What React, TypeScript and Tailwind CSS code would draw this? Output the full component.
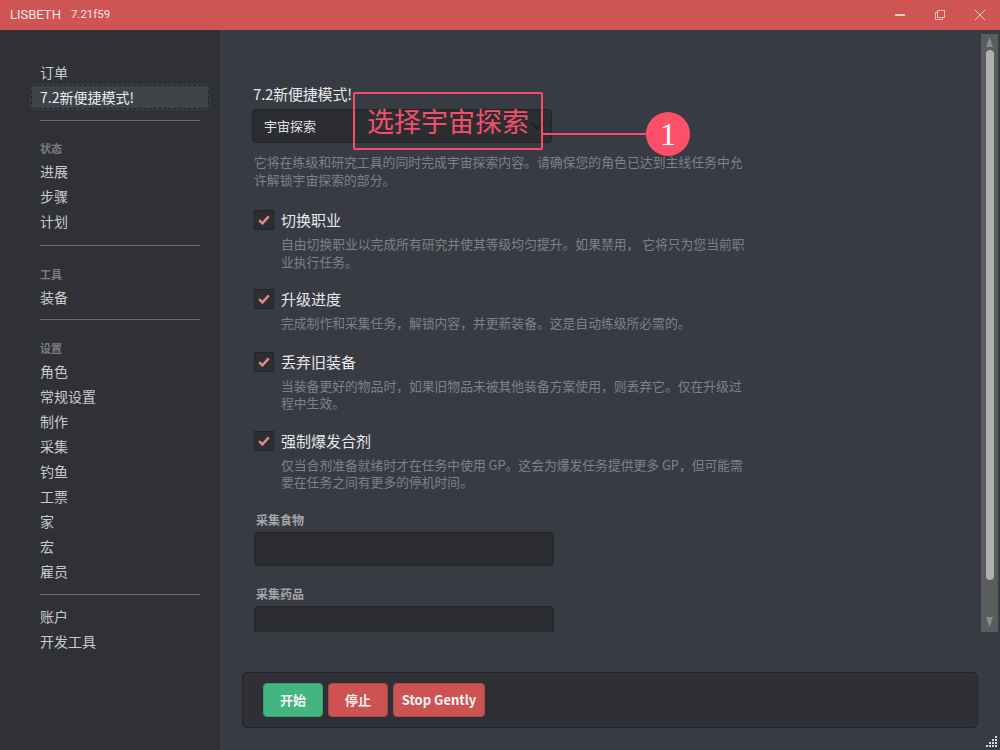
import React from "react";

const font = { fontFamily: '"Noto Sans CJK SC", "Noto Sans", sans-serif' };

function NavItem({ label }: { label: string }) {
  return <div className="h-[25px] pl-[40px] text-[14px] leading-[25px] text-[#c9cacc]">{label}</div>;
}
function NavHead({ label }: { label: string }) {
  return <div className="h-[18px] pl-[40px] text-[11px] leading-[18px] font-bold text-[#7b7d82]">{label}</div>;
}
function Divider({ top, bottom }: { top: string; bottom: string }) {
  return <div className={`ml-[40px] w-[160px] h-px bg-[#6a6b70] ${top} ${bottom}`} />;
}

function Check({ title, desc, className }: { title: string; desc: React.ReactNode; className: string }) {
  return (
    <div className={`flex ${className}`}>
      <div className="w-[20px] h-[20px] mt-[1px] ml-[1px] bg-[#2d2e33] border border-[#232428] flex items-center justify-center shrink-0">
        <svg width="12" height="10" viewBox="0 0 12 10" fill="none">
          <path d="M1.2 5.2 L4.4 8.4 L10.8 1.4" stroke="#e08a8a" strokeWidth="2.4" />
        </svg>
      </div>
      <div className="ml-[7px] w-[470px]">
        <div className="text-[15px] leading-[22px] text-[#e8e9ea]">{title}</div>
        <div className="mt-[4px] text-[12.8px] leading-[17.5px] text-[#7f8186]">{desc}</div>
      </div>
    </div>
  );
}

function Btn({ label, color, border, w }: { label: string; color: string; border: string; w: string }) {
  return (
    <div className={`h-[34px] ${w} ${color} ${border} border rounded-[4px] flex items-center justify-center text-[13px] font-bold text-[#f4f4f4]`}>
      {label}
    </div>
  );
}

export default function App() {
  return (
    <div className="w-[1000px] h-[750px] flex flex-col overflow-hidden bg-[#383b43]" style={font}>
      <div className="h-[30px] shrink-0 bg-[#cf5454] flex items-center text-[#f3e3e3] relative">
        <span className="ml-[10px] text-[13px]" style={{ fontFamily: 'Roboto, sans-serif' }}>LISBETH</span>
        <span className="ml-[10px] text-[11.5px]" style={{ fontFamily: 'Roboto, sans-serif' }}>7.21f59</span>
        <div className="ml-auto flex items-center gap-[30px] mr-[15px]">
          <svg width="10" height="2" viewBox="0 0 10 2"><rect width="10" height="2" fill="#e8c9c9" /></svg>
          <svg width="10" height="10" viewBox="0 0 10 10" fill="none" stroke="#e8c0c0">
            <rect x="2.5" y="0.5" width="7" height="7" />
            <path d="M2.5 2.5 H0.5 V9.5 H7.5 V7.5" />
          </svg>
          <svg width="10" height="10" viewBox="0 0 10 10" fill="none" stroke="#e8c9c9">
            <path d="M0 0 L10 10 M10 0 L0 10" />
          </svg>
        </div>
      </div>
      <div className="flex flex-1 min-h-0">
        <div className="w-[220px] shrink-0 bg-[#2f3136] pt-[30px]">
          <NavItem label="订单" />
          <div className="ml-[31px] w-[178px] h-[24px] pl-[8px] bg-[#3e4249] border border-dashed border-[#1f2124] rounded-[3px] outline outline-[1px] outline-[#3a3e44] text-[14px] leading-[22px] text-[#eceded]">7.2新便捷模式!</div>
          <Divider top="mt-[11px]" bottom="mb-[18px]" />
          <NavHead label="状态" />
          <div className="mt-[2px]">
            <NavItem label="进展" />
            <NavItem label="步骤" />
            <NavItem label="计划" />
          </div>
          <Divider top="mt-[11px]" bottom="mb-[19px]" />
          <NavHead label="工具" />
          <div className="mt-[2px]"><NavItem label="装备" /></div>
          <Divider top="mt-[9px]" bottom="mb-[19px]" />
          <NavHead label="设置" />
          <div className="mt-[2px]">
            {["角色", "常规设置", "制作", "采集", "钓鱼", "工票", "家", "宏", "雇员"].map((l) => (
              <NavItem key={l} label={l} />
            ))}
          </div>
          <Divider top="mt-[10px]" bottom="mb-[9px]" />
          <NavItem label="账户" />
          <NavItem label="开发工具" />
        </div>

        <div className="flex-1 min-w-0 flex flex-col relative">
          <div className="h-[602px] shrink-0 flex overflow-hidden">
            <div className="flex-1 overflow-hidden pl-[33px] pt-[54px]">
              <div className="text-[15px] leading-[20px] text-[#e8e9ea] tracking-[-0.2px]">7.2新便捷模式!</div>
              <div className="mt-[5px] -ml-px w-[300px] h-[34px] bg-[#2c2d31] border border-[#232428] rounded-[4px] flex items-center pl-[11px] text-[13px] text-[#e0e1e2]">
                宇宙探索
                <svg width="14" height="9" viewBox="0 0 14 9" fill="none" className="ml-auto mr-[6px]">
                  <path d="M1 1 L7 7 L13 1" stroke="#1f2024" strokeWidth="2" />
                </svg>
              </div>
              <div className="mt-[10px] ml-[1px] w-[495px] text-[12.87px] leading-[17.6px] text-[#7f8186]">
                它将在练级和研究工具的同时完成宇宙探索内容。请确保您的角色已达到主线任务中允许解锁宇宙探索的部分。
              </div>
              <Check className="mt-[21px]" title="切换职业" desc="自由切换职业以完成所有研究并使其等级均匀提升。如果禁用， 它将只为您当前职业执行任务。" />
              <Check className="mt-[18px]" title="升级进度" desc="完成制作和采集任务，解锁内容，并更新装备。这是自动练级所必需的。" />
              <Check className="mt-[19px]" title="丢弃旧装备" desc="当装备更好的物品时，如果旧物品未被其他装备方案使用，则丢弃它。仅在升级过程中生效。" />
              <Check className="mt-[18px]" title="强制爆发合剂" desc="仅当合剂准备就绪时才在任务中使用 GP。这会为爆发任务提供更多 GP，但可能需要在任务之间有更多的停机时间。" />
              <div className="mt-[21px] ml-[3px] text-[12px] leading-[16px] font-bold text-[#a5a6a9]">采集食物</div>
              <div className="mt-[4px] ml-[1px] w-[300px] h-[34px] bg-[#2c2d31] border border-[#232428] rounded-[4px]" />
              <div className="mt-[20px] ml-[3px] text-[12px] leading-[16px] font-bold text-[#a5a6a9]">采集药品</div>
              <div className="mt-[4px] ml-[1px] w-[300px] h-[34px] bg-[#2c2d31] border border-[#232428] rounded-[4px]" />
            </div>
            <div className="w-[17px] h-[598px] mt-[4px] mr-[2px] bg-[#5b5c5e] flex flex-col items-center relative">
              <svg width="9" height="10" viewBox="0 0 9 10" className="mt-[3px] shrink-0"><path d="M4.5 0 L8 10 H1 Z" fill="#8a8b8d" /></svg>
              <div className="w-[8px] h-[530px] mt-[3px] rounded-full bg-[#b0b0b0]" />
              <svg width="9" height="10" viewBox="0 0 9 10" className="mt-[37px] shrink-0"><path d="M1 0 H8 L4.5 10 Z" fill="#8a8b8d" /></svg>
            </div>
          </div>

          <div className="ml-[22px] mt-[40px] w-[736px] h-[56px] bg-[#2f3035] border border-[#232428] rounded-[5px] flex items-center pl-[20px] gap-[5px]">
            <Btn label="开始" color="bg-[#43b581]" border="border-[#3a9a70]" w="w-[60px]" />
            <Btn label="停止" color="bg-[#cd5353]" border="border-[#a94a4c]" w="w-[60px]" />
            <Btn label="Stop Gently" color="bg-[#cd5353]" border="border-[#a94a4c]" w="w-[92px]" />
          </div>

          <svg width="12" height="12" viewBox="0 0 12 12" className="absolute right-[2px] bottom-[2px]" fill="#d8d8d8">
            <rect x="9" y="0" width="2" height="2" /><rect x="6" y="3" width="2" height="2" /><rect x="9" y="3" width="2" height="2" />
            <rect x="3" y="6" width="2" height="2" /><rect x="6" y="6" width="2" height="2" /><rect x="9" y="6" width="2" height="2" />
            <rect x="0" y="9" width="2" height="2" /><rect x="3" y="9" width="2" height="2" /><rect x="6" y="9" width="2" height="2" /><rect x="9" y="9" width="2" height="2" />
          </svg>

          {/* callout */}
          <div className="absolute left-[133px] top-[62px] w-[190px] h-[58px] border-2 border-[#f2506a] rounded-[2px] flex items-center justify-center text-[27px] text-[#f2506a]">
            选择宇宙探索
          </div>
          <div className="absolute left-[323px] top-[103px] w-[104px] h-[2px] bg-[#f2506a]" />
          <div
            className="absolute left-[426px] top-[82px] w-[44px] h-[44px] rounded-full bg-[#fb5067] flex items-center justify-center text-[32px] text-white"
            style={{ fontFamily: '"Liberation Serif", serif' }}
          >
            1
          </div>
        </div>
      </div>
    </div>
  );
}
